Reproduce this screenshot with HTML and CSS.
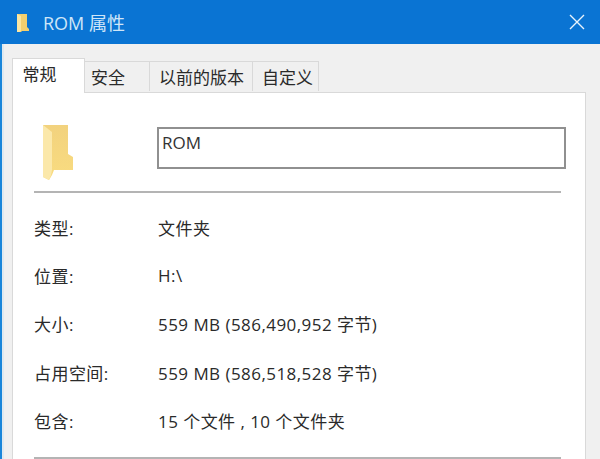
FILE: index.html
```html
<!DOCTYPE html>
<html lang="zh">
<head>
<meta charset="utf-8">
<title>ROM 属性</title>
<link rel="stylesheet" href="styles.css">
</head>
<body>
<div class="window">
  <header class="titlebar">
    <svg class="title-icon" width="14" height="20" viewBox="0 0 14 20">
      <path d="M1 2h10v13l2 2v2H6l-1 1H1z" fill="#f3cf6e"/>
      <path d="M1 2l4 2v14l-1 2H1z" fill="#fbe6a2"/>
    </svg>
    <span class="title-text">ROM 属性</span>
    <svg class="close" width="16" height="16" viewBox="0 0 16 16">
      <path d="M1 1l14 14M15 1L1 15" stroke="#e8f3fc" stroke-width="1.4" fill="none"/>
    </svg>
  </header>
  <div class="client">
    <nav class="tabs">
      <div class="tab active">常规</div>
      <div class="tab t2">安全</div>
      <div class="tab t3">以前的版本</div>
      <div class="tab t4">自定义</div>
    </nav>
    <main class="panel">
      <div class="head-row">
        <svg class="folder" width="32" height="58" viewBox="0 0 32 58">
          <defs>
            <linearGradient id="fg" x1="0" y1="0" x2="0" y2="1">
              <stop offset="0" stop-color="#f2d27e"/>
              <stop offset="1" stop-color="#f9dc80"/>
            </linearGradient>
          </defs>
          <path d="M1 1h25v29l5 3v13H12l-2 5-3 5-6-3z" fill="url(#fg)"/>
          <path d="M1 1l9 7v38l-1 5-2 5-6-3z" fill="#fbe8aa"/>
        </svg>
        <div class="name-box">ROM</div>
      </div>
      <hr class="sep">
      <div class="rows">
        <div class="row"><span class="label">类型:</span><span>文件夹</span></div>
        <div class="row"><span class="label">位置:</span><span>H:\</span></div>
        <div class="row"><span class="label">大小:</span><span>559 MB (586,490,952 字节)</span></div>
        <div class="row"><span class="label">占用空间:</span><span>559 MB (586,518,528 字节)</span></div>
        <div class="row"><span class="label">包含:</span><span>15 个文件 , 10 个文件夹</span></div>
      </div>
      <hr class="sep bottom">
    </main>
  </div>
</div>
</body>
</html>
```
FILE: styles.css
```css
* { box-sizing: border-box; }
html, body { margin: 0; padding: 0; }
body {
  width: 600px;
  height: 459px;
  overflow: hidden;
  font-family: "Open Sans", "Noto Sans CJK SC", sans-serif;
  font-size: 17px;
  color: #2a2a2a;
}
.window { width: 600px; height: 459px; display: flex; flex-direction: column; background: #f0f0f0; border-left: 2px solid #1a86da; }
.titlebar {
  height: 44px;
  margin-left: -2px;
  background: #0a74d3;
  display: flex;
  align-items: center;
  padding: 0 15px 0 16px;
  color: #cfe6f8;
  flex: none;
}
.title-icon { margin-right: 13px; }
.title-text { font-size: 18px; }
.close { margin-left: auto; }
.client { flex: 1; padding: 14px 14px 0 8px; border-left: 2px solid #dfe9f0; min-height: 0; display: flex; flex-direction: column; }
.tabs { display: flex; height: 34px; align-items: flex-end; position: relative; z-index: 1; flex: none; }
.tab {
  height: 30px;
  border: 1px solid #d9d9d9;
  border-bottom: 0;
  border-left: 0;
  background: #f0f0f0;
  display: flex;
  align-items: center;
  justify-content: center;
  margin-bottom: 1px;
  flex: none;
  font-family: "Noto Sans CJK SC", sans-serif;
  padding-bottom: 1px;
}
.tab.active { height: 35px; width: 73px; background: #fff; border-left: 1px solid #d9d9d9; margin-bottom: -1px; padding: 0 18px 6px 0; }
.t2 { width: 65px; padding-right: 18px; }
.t3 { width: 103px; padding-left: 1px; }
.t4 { width: 66px; padding-left: 4px; }
.panel { flex: 1; min-height: 0; background: #fff; border: 1px solid #d9d9d9; border-bottom: 0; padding: 0 0 0 21px; }
.head-row { display: flex; height: 98px; padding-top: 31px; }
.folder { margin-left: 8px; flex: none; }
.name-box {
  width: 409px;
  height: 42px;
  margin-left: 83px;
  margin-top: 3px;
  border: 2px solid #909090;
  padding: 2px 3px;
  font-size: 17px;
  color: #333;
  line-height: 24px;
}
.sep { width: 527px; height: 2px; margin: 0; border: 0; background: #b4b4b4; }
.rows { display: flex; flex-direction: column; padding-top: 10px; }
.row { height: 48.4px; display: flex; align-items: center; letter-spacing: 0.45px; }
.label { width: 124px; flex: none; }
.bottom { margin-top: 12px; }
```
